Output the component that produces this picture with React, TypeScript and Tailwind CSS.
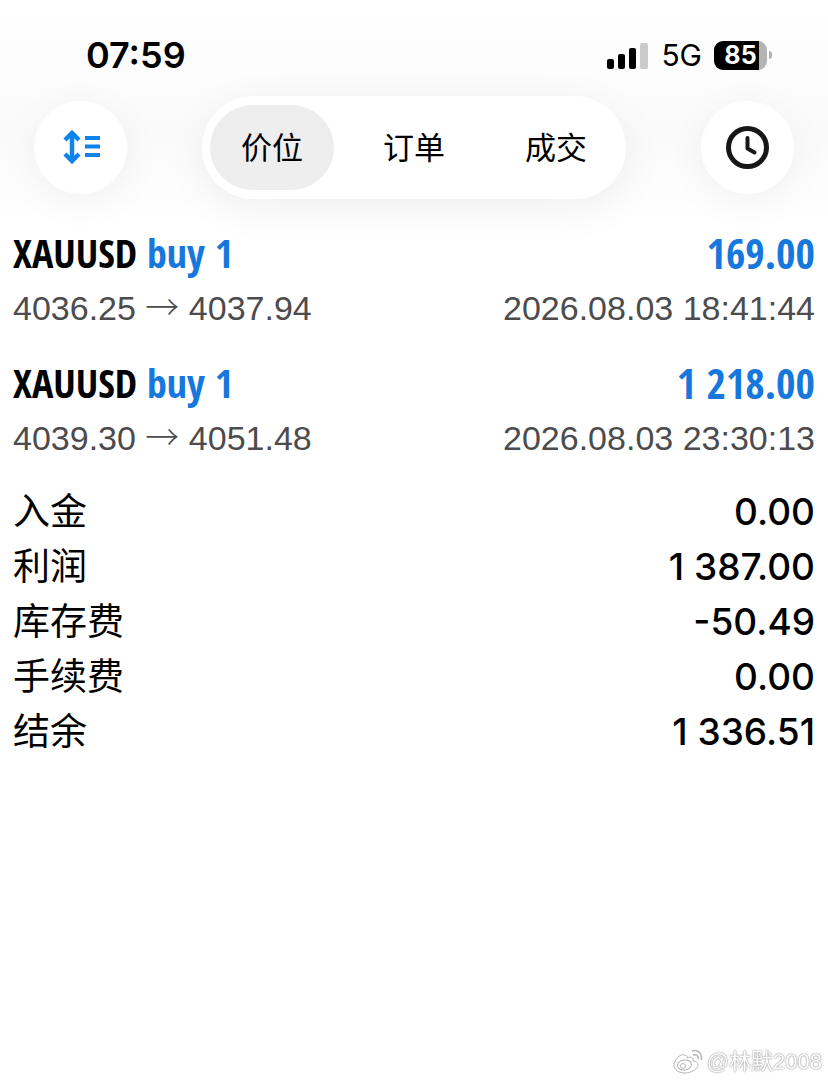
import { useState } from "react";

const TABS = ["价位", "订单", "成交"];

const TRADES = [
  { id: 1, symbol: "XAUUSD", side: "buy 1", open: "4036.25", close: "4037.94", time: "2026.08.03 18:41:44", profit: "169.00" },
  { id: 2, symbol: "XAUUSD", side: "buy 1", open: "4039.30", close: "4051.48", time: "2026.08.03 23:30:13", profit: "1 218.00" },
];

const SUMMARY = [
  { label: "入金", value: "0.00" },
  { label: "利润", value: "1 387.00" },
  { label: "库存费", value: "-50.49" },
  { label: "手续费", value: "0.00" },
  { label: "结余", value: "1 336.51" },
];

function StatusBar() {
  return (
    <div className="flex h-24 items-center justify-between pt-[14px] pr-14 pl-[86px]">
      <span className="text-[36px] leading-10 font-semibold">07:59</span>
      <div className="flex items-center">
        <svg width="42" height="27" viewBox="0 0 42 27" aria-hidden="true">
          <rect x="0" y="17" width="7" height="10" rx="2" />
          <rect x="11" y="12" width="7" height="15" rx="2" />
          <rect x="22" y="6" width="7" height="21" rx="2" />
          <rect x="33" y="1" width="8" height="26" rx="2" fill="#cbcbcb" />
        </svg>
        <span className="ml-3 text-[30px] leading-10">5G</span>
        <div className="ml-3 flex items-center gap-0.5">
          <div className="flex h-[29px] w-[53px] items-center justify-center overflow-hidden rounded-[9px] bg-linear-to-r from-black from-85% to-[#b4b4b4] to-85% text-[25px] leading-7 font-bold text-white">
            85
          </div>
          <div className="h-2 w-[3px] rounded-r-full bg-[#b4b4b4]" />
        </div>
      </div>
    </div>
  );
}

function Toolbar() {
  const [active, setActive] = useState(0);

  return (
    <div className="flex items-center justify-between px-[34px]">
      <button
        aria-label="排序"
        className="flex size-[93px] items-center justify-center rounded-full bg-white pl-0.5 shadow-[0_8px_40px_rgba(0,0,0,0.05)]"
      >
        <svg width="40" height="36" viewBox="0 0 40 36" fill="none" stroke="#0f82ec" aria-hidden="true">
          <path d="M10 4v26M3 10l7-7 7 7M3 24l7 7 7-7" strokeWidth="4.5" />
          <path d="M23 8h15M23 16.5h15M23 25h15" strokeWidth="4" />
        </svg>
      </button>

      <div className="flex gap-[18px] rounded-full bg-white px-2 py-[9px] shadow-[0_10px_44px_rgba(0,0,0,0.06)]">
        {TABS.map((tab, i) => (
          <button
            key={tab}
            onClick={() => setActive(i)}
            className={
              i === active
                ? "h-[85px] w-[124px] rounded-full bg-[#eeeeee] pt-0.5 text-[31px]"
                : "h-[85px] w-[124px] rounded-full pt-0.5 text-[31px]"
            }
          >
            {tab}
          </button>
        ))}
      </div>

      <button
        aria-label="历史"
        className="flex size-[93px] items-center justify-center rounded-full bg-white shadow-[0_8px_40px_rgba(0,0,0,0.05)]"
      >
        <svg width="44" height="44" viewBox="0 0 44 44" fill="none" stroke="#17171a" strokeLinecap="round" strokeLinejoin="round" aria-hidden="true">
          <circle cx="21.5" cy="21.5" r="19" strokeWidth="5" />
          <path d="M21.500 12v10.500l7 4" strokeWidth="4" />
        </svg>
      </button>
    </div>
  );
}

function Watermark() {
  return (
    <div className="fixed right-1.5 bottom-1 flex items-center gap-1 text-[22px] leading-7 text-white [text-shadow:0_0_2px_#888,0_0_1px_#aaa]">
      <svg width="30" height="26" viewBox="0 0 30 26" fill="none" stroke="#b5b5b5" aria-hidden="true">
        <path d="M11 6c-3-2-10 5-10 10 0 5 5 8 11 8s13-4 13-8c0-3-3-4-5-4 1-3-1-5-6-3 1-2-1-3-3-3z" />
        <ellipse cx="11.500" cy="16" rx="7" ry="5" transform="rotate(-8 11.500 16)" />
        <circle cx="10" cy="17" r="2.500" />
        <path d="M19 2c6-2 11 3 9 9M20 6c3-1 6 1 5 4" strokeWidth="1.500" />
      </svg>
      <span className="font-['Liberation_Sans','Noto_Sans_CJK_SC',sans-serif]">@林默2008</span>
    </div>
  );
}

export default function App() {
  return (
    <div className="min-h-screen bg-white font-[Inter,'Noto_Sans_CJK_SC',sans-serif] text-black">
      <header className="bg-linear-to-b from-white via-[#fafafa] via-60% to-white pb-[26px]">
        <StatusBar />
        <Toolbar />
      </header>

      <main className="px-[13px]">
        <ul className="space-y-5">
          {TRADES.map((trade) => (
            <li key={trade.id}>
              <div className="flex justify-between font-['Open_Sans_Condensed','Noto_Sans_Condensed','Roboto_Condensed','Liberation_Sans_Narrow',sans-serif] text-[40px] leading-[56px] font-bold">
                <p>
                  {trade.symbol} <span className="text-[#1677dc]">{trade.side}</span>
                </p>
                <p className="text-[42px] text-[#1677dc]">{trade.profit}</p>
              </div>
              <div className="flex justify-between font-['Liberation_Sans',sans-serif] text-[34px] leading-[54px] text-[#4c4c4e]">
                <p>
                  {trade.open} <span className="font-['Noto_Sans_CJK_SC',sans-serif] leading-none font-light">→</span> {trade.close}
                </p>
                <p>{trade.time}</p>
              </div>
            </li>
          ))}
        </ul>

        <dl className="mt-[19px]">
          {SUMMARY.map((row) => (
            <div key={row.label} className="flex justify-between text-[37px] leading-[55px]">
              <dt>{row.label}</dt>
              <dd className="font-medium">{row.value}</dd>
            </div>
          ))}
        </dl>
      </main>

      <Watermark />
    </div>
  );
}
